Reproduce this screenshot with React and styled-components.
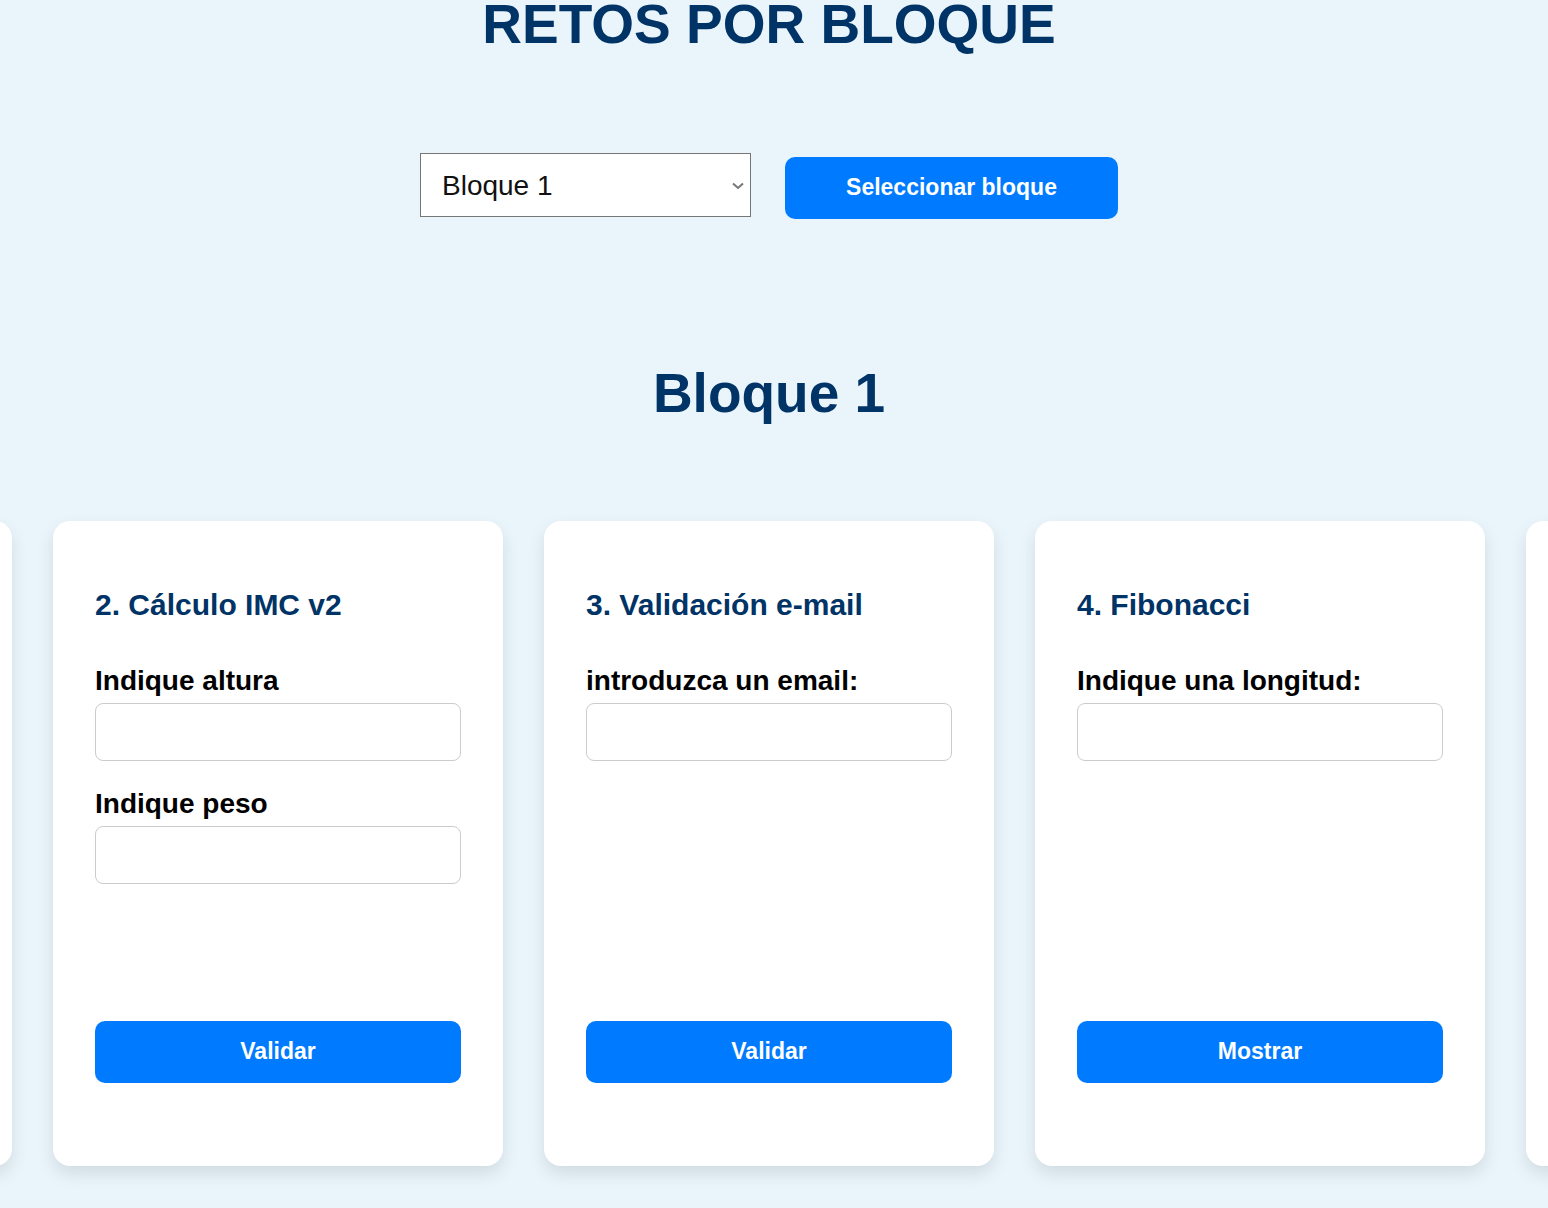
import React, { useState } from "react";
import styled, { createGlobalStyle } from "styled-components";

const GlobalStyle = createGlobalStyle`
  *, *::before, *::after {
    box-sizing: border-box;
  }

  body {
    margin: 0;
    background: #e9f4fb;
    color: #000;
    font-family: "Liberation Sans", Arial, sans-serif;
  }
`;

const Page = styled.main`
  display: flex;
  flex-direction: column;
  align-items: center;
  min-height: 100vh;
  padding: 0 10px 42px 0;
  overflow-x: clip;
`;

const Heading = styled.h1`
  margin: 0;
  color: #003366;
  font-size: 55px;
  font-weight: 700;
  line-height: 48px;
  text-align: center;
`;

const Selector = styled.form`
  display: flex;
  align-items: baseline;
  justify-content: center;
  gap: 34px;
  margin: 105px 0 150px;
`;

const SelectBox = styled.div`
  position: relative;
  width: 331px;
`;

const BlockSelect = styled.select`
  appearance: none;
  display: block;
  width: 100%;
  height: 64px;
  padding: 0 40px 0 21px;
  border: 1px solid #767676;
  border-radius: 0;
  background: #fff;
  color: #111;
  font-family: inherit;
  font-size: 28px;
`;

const Chevron = styled.svg`
  position: absolute;
  top: 29px;
  right: 7px;
  width: 12px;
  height: 8px;
  pointer-events: none;
`;

const Button = styled.button`
  width: ${({ $width }) => $width || "100%"};
  height: 62px;
  padding: 0 0 2px;
  border: 0;
  border-radius: 10px;
  background: #007bff;
  color: #fff;
  font-family: inherit;
  font-size: 23px;
  font-weight: 700;
  cursor: pointer;
`;

const CardRow = styled.section`
  display: flex;
  justify-content: center;
  gap: 41px;
  width: 100%;
  margin-top: 104px;
`;

const Card = styled.article`
  display: flex;
  flex: 0 0 450px;
  flex-direction: column;
  min-height: 645px;
  padding: 66px 42px 83px;
  border-radius: 17px;
  background: #fff;
  box-shadow: 0 8px 17px rgba(0, 0, 0, 0.1);
`;

const CardTitle = styled.h2`
  margin: 0 0 42px;
  color: #003366;
  font-size: 30px;
  line-height: 36px;
`;

const CardForm = styled.form`
  display: flex;
  flex: 1;
  flex-direction: column;
  justify-content: space-between;
`;

const Fields = styled.div`
  display: grid;
  gap: 27px;
`;

const Field = styled.div`
  display: grid;
  gap: 6px;
`;

const Label = styled.label`
  font-size: 28px;
  font-weight: 700;
  line-height: 32px;
`;

const Input = styled.input`
  width: 100%;
  height: 58px;
  padding: 0 16px;
  border: 1px solid #ccc;
  border-radius: 8px;
  background: #fff;
  font-family: inherit;
  font-size: 28px;
`;

const challenges = [
  {
    id: "imc",
    title: "2. Cálculo IMC v2",
    fields: ["Indique altura", "Indique peso"],
    action: "Validar",
  },
  {
    id: "email",
    title: "3. Validación e-mail",
    fields: ["introduzca un email:"],
    action: "Validar",
  },
  {
    id: "fibonacci",
    title: "4. Fibonacci",
    fields: ["Indique una longitud:"],
    action: "Mostrar",
  },
];

const stay = (event) => event.preventDefault();

function Challenge({ id, title, fields, action }) {
  return (
    <Card>
      <CardTitle>{title}</CardTitle>
      <CardForm onSubmit={stay}>
        <Fields>
          {fields.map((label, index) => (
            <Field key={label}>
              <Label htmlFor={`${id}-${index}`}>{label}</Label>
              <Input id={`${id}-${index}`} type="text" />
            </Field>
          ))}
        </Fields>
        <Button type="submit">{action}</Button>
      </CardForm>
    </Card>
  );
}

export default function App() {
  const [block, setBlock] = useState("Bloque 1");

  return (
    <>
      <GlobalStyle />
      <Page>
        <Heading>RETOS POR BLOQUE</Heading>
        <Selector onSubmit={stay}>
          <SelectBox>
            <BlockSelect
              aria-label="Bloque"
              value={block}
              onChange={(event) => setBlock(event.target.value)}
            >
              <option>Bloque 1</option>
            </BlockSelect>
            <Chevron viewBox="0 0 12 8" aria-hidden="true">
              <path d="M1 1.5L6 6L11 1.5" fill="none" stroke="#767676" strokeWidth="2" />
            </Chevron>
          </SelectBox>
          <Button type="submit" $width="333px">
            Seleccionar bloque
          </Button>
        </Selector>
        <Heading as="h2">{block}</Heading>
        <CardRow>
          <Card aria-hidden="true" />
          {challenges.map((challenge) => (
            <Challenge key={challenge.id} {...challenge} />
          ))}
          <Card aria-hidden="true" />
        </CardRow>
      </Page>
    </>
  );
}
